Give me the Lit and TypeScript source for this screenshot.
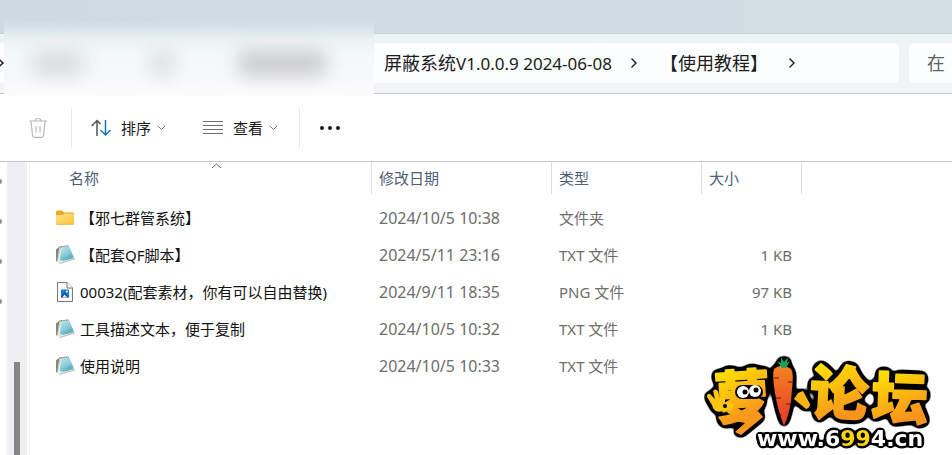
import { LitElement, html, css } from "lit";
import { customElement } from "lit/decorators.js";

const chevron = (cls: string, d: string, w: number, h: number) => html`
  <svg class=${cls} width=${w} height=${h} viewBox="0 0 ${w} ${h}" fill="none" aria-hidden="true">
    <path d=${d} stroke="currentColor" />
  </svg>`;

const next = () => chevron("next", "M1.5 1.5L6 6L1.5 10.5", 8, 12);
const down = () => chevron("down", "M1 1L4.5 4.5L8 1", 9, 6);

const icons: Record<string, unknown> = {
  folder: html`<svg width="20" height="20" viewBox="0 0 20 20" aria-hidden="true">
    <defs><linearGradient id="f" x1="0" y1="0" x2="1" y2="1">
      <stop offset="0" stop-color="#ffe08a" /><stop offset="1" stop-color="#fbc638" /></linearGradient></defs>
    <path d="M1 4Q1 2.500 2.500 2.500H7L9 4.500H18Q19 4.500 19 5.500V9H1Z" fill="#e6a91c" />
    <path d="M1 7H7.500L9.500 5.500H18.500Q19 5.500 19 6V15.500Q19 16.500 18 16.500H2Q1 16.500 1 15.500Z" fill="url(#f)" />
    <path d="M1.500 16.300H18.500" stroke="#dfa62b" stroke-width=".7" />
  </svg>`,
  txt: html`<svg width="20" height="20" viewBox="0 0 20 20" aria-hidden="true">
    <defs><linearGradient id="n" x1=".2" y1="0" x2=".8" y2="1">
      <stop offset="0" stop-color="#b5e3ea" /><stop offset=".5" stop-color="#8accd8" />
      <stop offset=".8" stop-color="#5badbf" /><stop offset="1" stop-color="#a5d8de" /></linearGradient></defs>
    <path d="M1 4.500L4.500 1.500L2.500 17L1 16Z" fill="#85877c" />
    <path d="M4.500 1.500L6.500 2L4.500 17.500L2 17Z" fill="#c8c9bb" />
    <path d="M6 2L14 .8L19.800 14L4.500 18.500L2.500 17Z" fill="#e6ede9" />
    <path d="M6.500 2.500L14 1.300L19.300 13.500L8 15.800L4.800 15Z" fill="url(#n)" />
    <path d="M4.500 2L14 .8" stroke="#6d6f6a" stroke-width="1.200" stroke-dasharray="1 .6" />
    <path d="M4.500 18.500L19.800 14" stroke="#b3a698" stroke-width=".8" />
  </svg>`,
  png: html`<svg width="20" height="20" viewBox="0 0 20 20" aria-hidden="true">
    <path d="M2.500 .5H12L17.500 6V19.500H2.500Z" fill="#fafafa" stroke="#77797d" />
    <path d="M12 .5V6H17.500" fill="#fff" stroke="#77797d" />
    <rect x="6" y="7.500" width="8" height="8" rx="1" fill="#1b78d0" />
    <path d="M6 14.500L9.500 10.800L14 15.500H6Z" fill="#0b3f8c" />
    <path d="M7 15.500L9.500 12.500L12.500 15.500Z" fill="#e8f3fd" />
    <circle cx="12" cy="9.500" r="1" fill="#fff" />
  </svg>`,
};

const files = [
  { icon: "folder", name: "【邪七群管系统】", date: "2024/10/5 10:38", type: "文件夹", size: "" },
  { icon: "txt", name: "【配套QF脚本】", date: "2024/5/11 23:16", type: "TXT 文件", size: "1 KB" },
  { icon: "png", name: "00032(配套素材，你有可以自由替换)", date: "2024/9/11 18:35", type: "PNG 文件", size: "97 KB" },
  { icon: "txt", name: "工具描述文本，便于复制", date: "2024/10/5 10:32", type: "TXT 文件", size: "1 KB" },
  { icon: "txt", name: "使用说明", date: "2024/10/5 10:33", type: "TXT 文件", size: "" },
];

@customElement("forum-logo")
export class ForumLogo extends LitElement {
  static styles = css`
    :host { display: block; }
    svg { display: block; }
    .word { font-family: "Noto Sans CJK SC", sans-serif; font-weight: 900; stroke-width: 2; stroke-linejoin: round; }
    .url { font: bold 22px "DejaVu Sans", sans-serif; fill: #fff; }
  `;

  render() {
    return html`<svg width="240" height="112" viewBox="0 0 240 112" role="img" aria-label="萝卜论坛 www.6994.cn">
      <defs>
        <linearGradient id="gold" x1="0" y1="0" x2=".3" y2="1">
          <stop offset=".2" stop-color="#ffe600" /><stop offset=".9" stop-color="#f7941d" />
        </linearGradient>
        <linearGradient id="carrot" x1="0" y1="0" x2="0" y2="1">
          <stop offset="0" stop-color="#f58220" /><stop offset="1" stop-color="#e5392a" />
        </linearGradient>
        <filter id="outline" x="-10%" y="-20%" width="120%" height="140%" color-interpolation-filters="sRGB">
          <feGaussianBlur in="SourceAlpha" stdDeviation="3" />
          <feComponentTransfer result="edge"><feFuncA type="linear" slope="14" intercept="-1" /></feComponentTransfer>
          <feMerge><feMergeNode in="edge" /><feMergeNode in="SourceGraphic" /></feMerge>
        </filter>
        <filter id="thin" x="-10%" y="-30%" width="120%" height="160%" color-interpolation-filters="sRGB">
          <feGaussianBlur in="SourceAlpha" stdDeviation="2" />
          <feComponentTransfer result="edge"><feFuncA type="linear" slope="14" intercept="-1" /></feComponentTransfer>
          <feMerge><feMergeNode in="edge" /><feMergeNode in="SourceGraphic" /></feMerge>
        </filter>
      </defs>
      <g filter="url(#outline)">
        <g class="word" fill="url(#gold)" stroke="url(#gold)">
          <text font-size="56" transform="translate(15 76) rotate(-4)">萝</text>
          <text font-size="58" transform="translate(108 70) rotate(3)">论</text>
          <text font-size="56" transform="translate(170 75) rotate(2)">坛</text>
        </g>
        <path d="M34 78L57 68L62 74L40 92L34 89L44 80Z" fill="#f7981d" />
        <path d="M22 68Q13 71 11 62L6 54Q6 50 9 51L14 56L12 48Q14 45 17 48L19 56L20 51Q23 48 24 52L24 60Q31 57 33 62Q33 69 22 68Z" fill="#fdc50f" />
        <path d="M97 50L102 48L109 61Q109 65 105 66L93 56Z" fill="#fdb515" />
        <path d="M73 26Q81 19 90 26Q93 30 91 46Q90 68 83 83Q77 68 74 50Q71 32 73 26Z" fill="url(#carrot)" />
        <path d="M81 25L76 18L80 20L80 14L83 19L87 14L86 20L89 18L85 25Z" fill="#18a05d" />
      </g>
      <circle cx="24" cy="63" r="2" />
      <path d="M73 35H78M87 39H92M75 55H80M85 61H89M78 72H81" stroke="#5b1c0c" stroke-width="1.200" />
      <rect x="34" y="42" width="28" height="14" rx="7" />
      <circle cx="42" cy="49" r="6" fill="#fff" /><circle cx="54" cy="48" r="6" fill="#fff" />
      <circle cx="44" cy="49" r="2.500" /><circle cx="55" cy="47" r="2.500" />
      <text class="url" x="56" y="103" filter="url(#thin)">www.6<tspan fill="#ffd800">99</tspan>4.cn</text>
    </svg>`;
  }
}

@customElement("app-root")
export class AppRoot extends LitElement {
  static styles = css`
    :host {
      display: flex; flex-direction: column; position: relative; min-height: 100vh;
      overflow: hidden; background: #fff; color: #1b1b1b;
      font: 15px/20px "Noto Sans", "Noto Sans CJK SC", sans-serif;
    }
    * { box-sizing: border-box; }
    svg { display: block; flex: none; }
    button { font: inherit; color: inherit; background: none; border: 0; padding: 0; display: flex; align-items: center; }
    .title { height: 34px; background: linear-gradient(90deg, #ccdbe1, #cfdfe4); border-bottom: 1px solid #c3d0d5; }
    .location {
      display: flex; gap: 10px; height: 60px; padding: 9px 0 10px;
      background: linear-gradient(#ecf2f6, #f2f3f5 60%); border-bottom: 1px solid #c4c5c9;
    }
    .address {
      flex: 1; display: flex; align-items: center; background: #fbfdfe;
      border-radius: 0 5px 5px 0; font-size: 18px; line-height: 24px; white-space: nowrap;
    }
    .address a { color: inherit; text-decoration: none; }
    .address svg { stroke-width: 1.4; }
    .hidden-path { width: 376px; }
    .version { font-size: 17px; }
    .first { margin-right: 18px; }
    .second { margin: 0 20px 0 22px; }
    .search {
      width: 43px; border: 0; outline: 0; padding: 0 0 0 18px; background: #fbfdfe;
      border-radius: 5px 0 0 5px; font: inherit; font-size: 18px; color: #5f5f5f;
    }
    .search::placeholder { color: #5f5f5f; opacity: 1; }
    .smudge {
      position: absolute; left: 4px; top: 20px; width: 370px; height: 76px; overflow: hidden;
      background: linear-gradient(#d9e6eb00, #dbe7ec 14%, #edf3f5 28%, #f3f8f9 45%, #f7f8fa 75%, #fcfcfd);
    }
    .blob { position: absolute; top: 30px; height: 26px; filter: blur(9px); border-radius: 8px; }
    .b1 { left: 28px; width: 52px; background: #dadddf; }
    .b2 { left: 146px; width: 24px; background: #dcdfe0; }
    .b3 { left: 234px; width: 88px; background: #cbcccf; }
    .tools { display: flex; align-items: center; height: 68px; padding-left: 28px; border-bottom: 1px solid #c6c6ca; }
    .rule { width: 1px; height: 40px; background: #e8e8ea; }
    .trash { margin-right: 23px; }
    .tool { gap: 10px; }
    .tool .down { color: #777; margin-left: -4px; }
    .sort { margin: 0 37px 0 19px; }
    .view { margin-right: 21px; }
    .more { margin-left: 19px; }
    .body { flex: 1; display: flex; }
    .tree { width: 7px; overflow: hidden; padding-top: 17px; display: flex; flex-direction: column; gap: 35px; }
    .pin { width: 5px; height: 5px; margin-left: -3px; border-radius: 50%; background: #8b8b8f; flex: none; }
    .track { width: 20px; background: #efeff2; display: flex; flex-direction: column; align-items: center; padding-top: 200px; }
    .thumb { width: 6px; flex: 1; background: #858585; }
    .list { flex: 1; margin-left: 2px; border-left: 1px solid #f0f0f2; }
    table { border-collapse: separate; border-spacing: 0; table-layout: fixed; width: 772px; }
    .name { width: 342px; }
    .date { width: 180px; }
    .type { width: 150px; }
    .size { width: 100px; }
    th { position: relative; height: 32px; padding: 0 7px; text-align: left; font-weight: 400; color: #4c607a; border-right: 1px solid #dedee2; }
    th:first-child { padding-left: 39px; }
    .up { position: absolute; left: 181px; top: 1px; color: #666; }
    tbody::before { content: ""; display: block; height: 5px; }
    td { height: 37px; padding: 0 7px; color: #6d6d6d; white-space: nowrap; }
    td:first-child { padding-left: 25px; color: #111; }
    td:nth-child(2) { font-size: 16px; }
    td:last-child { text-align: right; padding-right: 10px; }
    .file { display: flex; align-items: center; gap: 5px; }
    forum-logo { position: absolute; right: 11px; bottom: 0; }
  `;

  render() {
    return html`
      <div class="title"></div>
      <div class="location">
        <nav class="address" aria-label="路径">
          ${chevron("prev", "M-2 1.5L3 6L-2 10.5", 8, 12)}
          <span class="hidden-path"></span>
          <a class="first" href="#">屏蔽系统<span class="version">V1.0.0.9 2024-06-08</span></a>
          ${next()}
          <a class="second" href="#">【使用教程】</a>
          ${next()}
        </nav>
        <input class="search" type="text" aria-label="搜索" placeholder="在" />
      </div>
      <div class="tools">
        <button class="trash" aria-label="删除">
          <svg width="20" height="22" viewBox="0 0 20 22" fill="none" stroke="#b9b9bd" stroke-width="1.200">
            <path d="M1 4H19M7 4Q7 1.500 10 1.500T13 4M3 4L4.500 18.500Q4.700 20.300 6.500 20.300H13.500Q15.300 20.300 15.500 18.500L17 4M8 9V15.500M12 9V15.500" />
          </svg>
        </button>
        <span class="rule"></span>
        <button class="tool sort">
          <svg width="20" height="18" viewBox="0 0 20 18" fill="none" stroke-width="1.500">
            <path d="M6 17V1.500M.7 7L6 1.500L9.500 5" stroke="#555" />
            <path d="M14.500 1V16M9.500 11L14.500 16L19.500 11" stroke="#1576bd" />
          </svg>
          排序 ${down()}
        </button>
        <button class="tool view">
          <svg width="20" height="14" viewBox="0 0 20 14" stroke="#6c6c70">
            <path d="M0 .5H20M0 4.500H20M0 8.500H20M0 12.500H20" />
          </svg>
          查看 ${down()}
        </button>
        <span class="rule"></span>
        <button class="more" aria-label="更多">
          <svg width="22" height="6" viewBox="0 0 22 6" fill="#1b1b1b">
            <circle cx="3" cy="3" r="2" /><circle cx="11" cy="3" r="2" /><circle cx="19" cy="3" r="2" />
          </svg>
        </button>
      </div>
      <div class="body">
        <div class="tree">${[0, 1, 2, 3].map(() => html`<span class="pin"></span>`)}</div>
        <div class="track"><span class="thumb"></span></div>
        <div class="list">
          <table>
            <thead>
              <tr>
                <th class="name">名称 ${chevron("up", "M1 5L5.5 1L10 5", 11, 6)}</th>
                <th class="date">修改日期</th>
                <th class="type">类型</th>
                <th class="size">大小</th>
              </tr>
            </thead>
            <tbody>
              ${files.map((f) => html`<tr>
                <td><span class="file">${icons[f.icon]}<span>${f.name}</span></span></td>
                <td>${f.date}</td>
                <td>${f.type}</td>
                <td>${f.size}</td>
              </tr>`)}
            </tbody>
          </table>
        </div>
      </div>
      <div class="smudge">
        <span class="blob b1"></span><span class="blob b2"></span><span class="blob b3"></span>
      </div>
      <forum-logo></forum-logo>
    `;
  }
}
